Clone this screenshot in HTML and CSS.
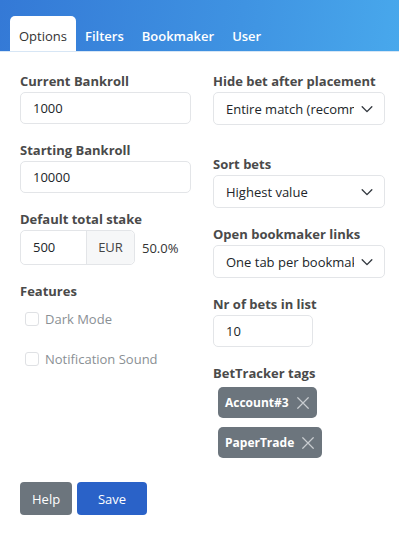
FILE: index.html
```html
<!DOCTYPE html>
<html lang="en">
<head>
<meta charset="UTF-8" />
<meta name="viewport" content="width=device-width, initial-scale=1.0"/>
<link rel="stylesheet" href="styles.css">
</head>
<body>

<header class="top">
  <nav class="tabs">
    <a href="#" class="tab tab--active">Options</a>
    <a href="#" class="tab">Filters</a>
    <a href="#" class="tab">Bookmaker</a>
    <a href="#" class="tab">User</a>
  </nav>
</header>

<main class="options">
  <div class="col">
    <div class="group">
      <label class="label">Current Bankroll</label>
      <div class="field">1000</div>
    </div>
    <div class="group">
      <label class="label">Starting Bankroll</label>
      <div class="field">10000</div>
    </div>
    <div class="group">
      <label class="label">Default total stake</label>
      <div class="stake">
        <div class="input-group">
          <div class="field field--stake">500</div>
          <span class="addon">EUR</span>
        </div>
        <span class="percent">50.0%</span>
      </div>
    </div>
    <div class="group">
      <label class="label">Features</label>
      <div class="check"><span class="box"></span>Dark Mode</div>
      <div class="check"><span class="box"></span>Notification Sound</div>
    </div>
  </div>

  <div class="col">
    <div class="group group--wide">
      <label class="label">Hide bet after placement</label>
      <div class="field select"><span class="select__text">Entire match (recommended)</span>
        <svg class="chev" viewBox="0 0 16 16" width="14" height="14"><path d="M2.5 5.5 8 11l5.5-5.5" fill="none" stroke="#343a40" stroke-width="1.6" stroke-linecap="round" stroke-linejoin="round"/></svg>
      </div>
    </div>
    <div class="group">
      <label class="label">Sort bets</label>
      <div class="field select"><span class="select__text">Highest value</span>
        <svg class="chev" viewBox="0 0 16 16" width="14" height="14"><path d="M2.5 5.5 8 11l5.5-5.5" fill="none" stroke="#343a40" stroke-width="1.6" stroke-linecap="round" stroke-linejoin="round"/></svg>
      </div>
    </div>
    <div class="group">
      <label class="label">Open bookmaker links</label>
      <div class="field select"><span class="select__text">One tab per bookmaker</span>
        <svg class="chev" viewBox="0 0 16 16" width="14" height="14"><path d="M2.5 5.5 8 11l5.5-5.5" fill="none" stroke="#343a40" stroke-width="1.6" stroke-linecap="round" stroke-linejoin="round"/></svg>
      </div>
    </div>
    <div class="group">
      <label class="label">Nr of bets in list</label>
      <div class="field field--small">10</div>
    </div>
    <div class="group">
      <label class="label">BetTracker tags</label>
      <div class="tags">
        <span class="tag">Account#3 <svg viewBox="0 0 16 16" width="14" height="14"><path d="M2 2l12 12M14 2 2 14" stroke="#c8ccd0" stroke-width="1.4" stroke-linecap="round"/></svg></span>
        <span class="tag">PaperTrade <svg viewBox="0 0 16 16" width="14" height="14"><path d="M2 2l12 12M14 2 2 14" stroke="#c8ccd0" stroke-width="1.4" stroke-linecap="round"/></svg></span>
      </div>
    </div>
  </div>
</main>

<footer class="actions">
  <button class="btn btn--gray">Help</button>
  <button class="btn btn--blue">Save</button>
</footer>

</body>
</html>
```

FILE: styles.css
```css
body {
  margin: 0;
  font-family: "Open Sans", "Noto Sans", sans-serif;
  font-size: 13px;
  color: #212529;
  background: #fff;
}

.top {
  height: 52px;
  background: linear-gradient(100deg, #3479d6 0%, #3f93e2 60%, #48a8ec 100%);
  border-bottom: 1px solid #d7e6f5;
  box-sizing: border-box;
}

.tabs {
  display: flex;
  align-items: flex-end;
  height: 51px;
  padding-left: 10px;
}

.tab {
  display: block;
  padding: 0 9px;
  height: 35px;
  line-height: 40px;
  text-decoration: none;
  color: #fff;
  font-weight: 600;
  font-size: 13px;
}

.tab--active {
  background: #fff;
  color: #333;
  font-weight: 400;
  border-radius: 5px 5px 0 0;
}

.options {
  display: grid;
  grid-template-columns: 171px 172px;
  column-gap: 22px;
  padding: 19px 0 0 20px;
}

.group {
  margin-bottom: 16px;
}

.group--wide {
  margin-bottom: 29px;
}

.label {
  display: block;
  font-weight: 700;
  color: #4a4a4a;
  font-size: 13px;
  line-height: 21px;
}

.field {
  height: 32px;
  border: 1px solid #e3e5e8;
  border-radius: 5px;
  box-sizing: border-box;
  padding: 0 12px;
  line-height: 30px;
  font-size: 13px;
  background: #fff;
}

.field--small {
  width: 100px;
}

.stake {
  display: flex;
  align-items: center;
}

.input-group {
  display: flex;
  height: 35px;
  border: 1px solid #e3e5e8;
  border-radius: 5px;
  box-sizing: border-box;
}

.field--stake {
  width: 66px;
  height: 33px;
  border: none;
  line-height: 33px;
  border-right: 1px solid #e3e5e8;
  border-radius: 5px 0 0 5px;
}

.addon {
  width: 47px;
  text-align: center;
  line-height: 33px;
  background: #f6f7f8;
  color: #444;
  border-radius: 0 5px 5px 0;
}

.percent {
  margin-left: 7px;
  color: #333;
}

.check {
  display: flex;
  align-items: center;
  color: #8a8f94;
  margin: 7px 0 0 5px;
  height: 20px;
}

.check + .check {
  margin-top: 20px;
}

.box {
  width: 12px;
  height: 12px;
  border: 1px solid #dfe1e4;
  border-radius: 3px;
  margin-right: 6px;
}

.select {
  display: flex;
  align-items: center;
  padding-right: 10px;
  height: 33px;
}

.select__text {
  flex: 1;
  overflow: hidden;
  white-space: nowrap;
}

.chev {
  flex: none;
  margin-left: 6px;
}

.tags {
  display: flex;
  flex-direction: column;
  align-items: flex-start;
  gap: 9px;
  margin: 3px 0 0 5px;
}

.tag {
  display: inline-flex;
  align-items: center;
  gap: 7px;
  height: 31px;
  padding: 0 7px;
  background: #6c757d;
  color: #fff;
  font-weight: 700;
  font-size: 12px;
  border-radius: 5px;
}

.actions {
  display: flex;
  gap: 5px;
  padding: 8px 0 0 20px;
}

.btn {
  height: 33px;
  border: none;
  border-radius: 4px;
  color: #fff;
  font-family: inherit;
  font-size: 13px;
  padding: 0 12px;
}

.btn--gray {
  background: #6c757d;
  width: 52px;
}

.btn--blue {
  background: #2a62c8;
  width: 70px;
}
```
